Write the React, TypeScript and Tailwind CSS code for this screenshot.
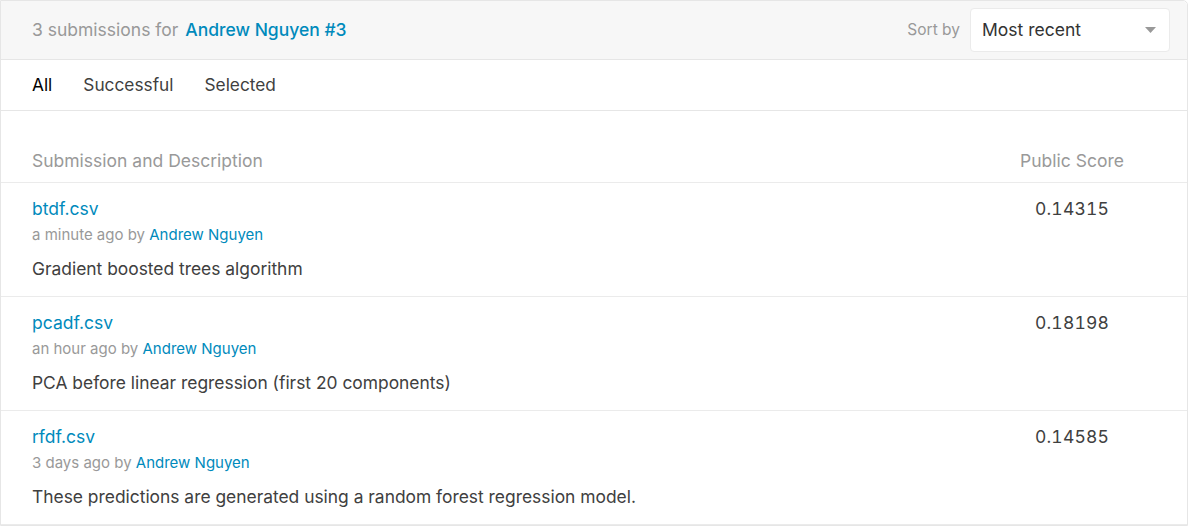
import { useState } from "react"

interface Submission {
  file: string
  when: string
  author: string
  description: string
  score: string
}

const submissions: Submission[] = [
  {
    file: "btdf.csv",
    when: "a minute ago",
    author: "Andrew Nguyen",
    description: "Gradient boosted trees algorithm",
    score: "0.14315",
  },
  {
    file: "pcadf.csv",
    when: "an hour ago",
    author: "Andrew Nguyen",
    description: "PCA before linear regression (first 20 components)",
    score: "0.18198",
  },
  {
    file: "rfdf.csv",
    when: "3 days ago",
    author: "Andrew Nguyen",
    description: "These predictions are generated using a random forest regression model.",
    score: "0.14585",
  },
]

const tabs = ["All", "Successful", "Selected"]

export default function App() {
  const [tab, setTab] = useState("All")

  return (
    <div className="min-h-screen bg-white font-['Inter','Liberation_Sans',sans-serif]">
      <div className="w-[1188px] rounded-tr-[5px] border border-[#e6e6e6] bg-white">
        {/* ヘッダー */}
        <div className="flex h-[58px] items-center justify-between rounded-tr-[5px] bg-[#f7f7f7] pl-[31px] pr-[17px]">
          <div className="text-[17.5px] leading-[24px] text-[#999]">
            3 submissions for{" "}
            <a href="#" className="ml-[2px] font-medium text-[#008abc]">
              Andrew Nguyen #3
            </a>
          </div>
          <div className="flex items-center gap-[10px]">
            <span className="text-[15.5px] text-[#999]">Sort by</span>
            <div className="flex h-[44px] w-[200px] items-center justify-between rounded-[4px] border border-[#ebebeb] bg-white pl-[11px] pr-[13px]">
              <span className="text-[17.5px] text-[#333]">Most recent</span>
              <svg width="11" height="6" viewBox="0 0 11 6">
                <path d="M0 0h11L5.5 6z" fill="#999" />
              </svg>
            </div>
          </div>
        </div>

        {/* タブ */}
        <div className="flex h-[52px] items-center gap-[31px] border-y border-[#e6e6e6] pl-[31px]">
          {tabs.map((t) => (
            <button
              key={t}
              onClick={() => setTab(t)}
              className={
                t === tab
                  ? "text-[17.3px] leading-[24px] text-black"
                  : "text-[17.3px] leading-[24px] text-[#404040]"
              }
            >
              {t}
            </button>
          ))}
        </div>

        {/* 列見出し */}
        <div className="flex items-end border-b border-[#ebebeb] pl-[31px] pr-[32px] pt-[38px] pb-[9px]">
          <div className="flex-1 text-[17.5px] leading-[24px] text-[#999]">
            Submission and Description
          </div>
          <div className="w-[166px] text-center text-[17.5px] leading-[24px] text-[#999]">
            Public Score
          </div>
        </div>

        {/* 提出リスト */}
        {submissions.map((s) => (
          <div
            key={s.file}
            className="flex border-b border-[#ebebeb] pl-[31px] pr-[32px] pt-[16px] pb-[15px]"
          >
            <div className="min-w-0 flex-1">
              <a href="#" className="block text-[17.5px] leading-[20px] text-[#008abc]">
                {s.file}
              </a>
              <div className="mt-[6px] text-[15px] leading-[20px] text-[#999]">
                {s.when} by{" "}
                <a href="#" className="text-[#008abc]">
                  {s.author}
                </a>
              </div>
              <p className="mt-[12px] text-[17.4px] leading-[24px] text-[#404040]">
                {s.description}
              </p>
            </div>
            <div className="w-[166px] text-center text-[17.5px] leading-[20px] tracking-[0.2px] tabular-nums text-[#404040]">
              {s.score}
            </div>
          </div>
        ))}
      </div>
    </div>
  )
}
